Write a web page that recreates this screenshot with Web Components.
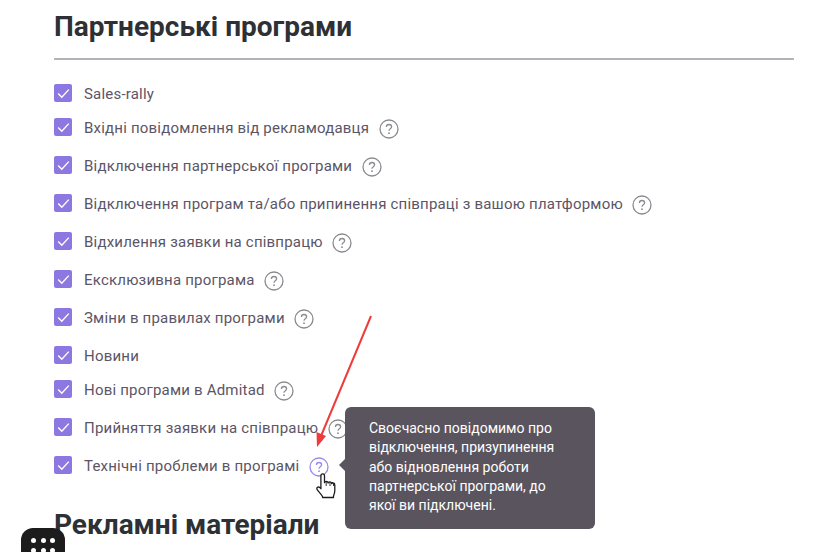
<!DOCTYPE html>
<html>
<head>
<meta charset="utf-8">
<style>
    html, body { margin: 0; height: 100%; overflow: hidden; background: #fff; }
    body { font-family: Roboto, "Liberation Sans", sans-serif; position: relative; }
</style>
</head>
<body>
<notify-page>
    <notify-section title="Партнерські програми">
        <notify-row>Sales-rally</notify-row>
        <notify-row hint>Вхідні повідомлення від рекламодавця</notify-row>
        <notify-row hint>Відключення партнерської програми</notify-row>
        <notify-row hint>Відключення програм та/або припинення співпраці з вашою платформою</notify-row>
        <notify-row hint>Відхилення заявки на співпрацю</notify-row>
        <notify-row hint>Ексклюзивна програма</notify-row>
        <notify-row hint>Зміни в правилах програми</notify-row>
        <notify-row>Новини</notify-row>
        <notify-row hint>Нові програми в Admitad</notify-row>
        <notify-row hint>Прийняття заявки на співпрацю</notify-row>
        <notify-row hint="active">Технічні проблеми в програмі</notify-row>
    </notify-section>
    <notify-section title="Рекламні матеріали" bare></notify-section>
</notify-page>
<hint-tooltip>Своєчасно повідомимо про відключення, призупинення або відновлення роботи партнерської програми, до якої ви підключені.</hint-tooltip>
<shot-marks></shot-marks>
<chat-launcher></chat-launcher>

<script>
class NotifyPage extends HTMLElement {
    constructor () {
        super()
        this.attachShadow({mode: 'open'})
    }

    connectedCallback () {
        this.shadowRoot.innerHTML = `
            <style>
                :host {
                    display: flex;
                    flex-direction: column;
                    padding: 0 24px 0 54px;
                }
            </style>
            <slot></slot>
        `
    }
}

class NotifySection extends HTMLElement {
    constructor () {
        super()
        this.attachShadow({mode: 'open'})
    }

    connectedCallback () {
        const bare = this.hasAttribute('bare')
        this.shadowRoot.innerHTML = `
            <style>
                :host {
                    display: block;
                }
                h2 {
                    color: #2d3136;
                    font-size: 28px;
                    font-weight: 700;
                    line-height: 34px;
                    margin: 0;
                    padding-top: 10px;
                }
                hr {
                    background: #b5b2b9;
                    border: 0;
                    height: 2px;
                    margin: 14px 0 24px;
                }
                :host([bare]) h2 {
                    padding-top: 14px;
                }
            </style>
            <h2>${this.getAttribute('title')}</h2>
            ${bare ? '' : '<hr>'}
            <slot></slot>
        `
    }
}

class NotifyRow extends HTMLElement {
    constructor () {
        super()
        this.attachShadow({mode: 'open'})
    }

    connectedCallback () {
        const hint = this.getAttribute('hint')
        const active = hint === 'active'
        const tint = active ? '#9a88ea' : '#8c8a8f'
        const icon = hint === null ? '' : `
            <svg class="hint" width="20" height="20" viewBox="0 0 20 20" fill="none">
                <circle cx="10" cy="10" r="9" stroke="${tint}" stroke-width="1.3"/>
                <path d="M7.4 8c0-1.5 1.1-2.5 2.6-2.5s2.6 1 2.6 2.3c0 1.9-2.6 2-2.6 3.9" stroke="${tint}" stroke-width="1.3"/>
                <circle cx="10" cy="14.2" r="0.9" fill="${tint}"/>
            </svg>
        `
        this.shadowRoot.innerHTML = `
            <style>
                :host {
                    align-items: flex-start;
                    color: #5c5566;
                    display: flex;
                    font-size: 15px;
                    line-height: 18px;
                    margin-bottom: 16px;
                }
                .box {
                    align-items: center;
                    background: #8d78e2;
                    border-radius: 2px;
                    display: flex;
                    flex: none;
                    height: 18px;
                    justify-content: center;
                    margin-right: 12px;
                    width: 18px;
                }
                .label {
                    letter-spacing: 0.2px;
                    line-height: 20px;
                    margin-bottom: -2px;
                }
                .hint {
                    display: block;
                    flex: none;
                    margin: 1px 0 1px 9.5px;
                }
            </style>
            <span class="box">
                <svg width="13" height="11" viewBox="0 0 13 11" fill="none">
                    <path d="M1.2 5.6 4.8 9.2 11.8 1.6" stroke="#fff" stroke-width="1.4"/>
                </svg>
            </span>
            <span class="label"><slot></slot></span>
            ${icon}
        `
    }
}

class HintTooltip extends HTMLElement {
    constructor () {
        super()
        this.attachShadow({mode: 'open'})
    }

    connectedCallback () {
        this.shadowRoot.innerHTML = `
            <style>
                :host {
                    background: #5a545e;
                    border-radius: 6px;
                    box-sizing: border-box;
                    color: #fff;
                    display: block;
                    font-size: 14px;
                    height: 122px;
                    left: 345px;
                    line-height: 19.3px;
                    padding: 12px 36px 0 24px;
                    position: absolute;
                    top: 407px;
                    width: 250px;
                }
                :host::before {
                    border-bottom: 6px solid transparent;
                    border-right: 6px solid #5a545e;
                    border-top: 6px solid transparent;
                    content: '';
                    left: -6px;
                    position: absolute;
                    top: 52px;
                }
            </style>
            <slot></slot>
        `
    }
}

class ShotMarks extends HTMLElement {
    constructor () {
        super()
        this.attachShadow({mode: 'open'})
    }

    connectedCallback () {
        this.shadowRoot.innerHTML = `
            <style>
                :host {
                    display: block;
                    height: 552px;
                    left: 0;
                    pointer-events: none;
                    position: absolute;
                    top: 0;
                    width: 818px;
                }
            </style>
            <svg width="818" height="552" viewBox="0 0 818 552" fill="none">
                <path d="M371 316 321 436" stroke="#ee3b3b" stroke-width="2"/>
                <path d="M317 447 316.5 432 326 436Z" fill="#ee3b3b"/>
                <path d="M322.5 496.5c-1.5-2.6-3.6-4.4-5.2-6.6-.9-1.2-.5-2.4.6-2.8 1-.3 2 .3 3 1.6v-12.8c0-1.2.8-2 1.8-2s1.8.8 1.8 2v6.8c.3-.9 1-1.3 1.8-1.3 1 0 1.7.7 1.8 1.6.3-.8 1.1-1.2 1.9-1.1.9.1 1.6.8 1.7 1.7.3-.6.9-.9 1.5-.8 1 .1 1.6 1 1.6 2.1v5.6c0 1.9-.5 3.6-1.3 5.4v1.6h-10.9z"
                    fill="#fff" stroke="#1c1c1c" stroke-width="1.3" stroke-linejoin="round"/>
                <path d="M326.2 481v5M330 482v4M333.5 483v3" stroke="#1c1c1c" stroke-width="0.9"/>
            </svg>
        `
    }
}

class ChatLauncher extends HTMLElement {
    constructor () {
        super()
        this.attachShadow({mode: 'open'})
    }

    connectedCallback () {
        const dots = Array.from({length: 9}, () => '<i></i>').join('')
        this.shadowRoot.innerHTML = `
            <style>
                :host {
                    background: #1c1c1c;
                    border-radius: 12px;
                    box-sizing: border-box;
                    display: grid;
                    gap: 4.5px;
                    grid-template-columns: repeat(3, 5px);
                    grid-auto-rows: 5px;
                    height: 44px;
                    left: 21px;
                    padding: 10px 0 0 10px;
                    position: absolute;
                    top: 528px;
                    width: 44px;
                }
                i {
                    background: #fff;
                    border-radius: 50%;
                }
            </style>
            ${dots}
        `
    }
}

window.customElements.define('notify-page', NotifyPage)
window.customElements.define('notify-section', NotifySection)
window.customElements.define('notify-row', NotifyRow)
window.customElements.define('hint-tooltip', HintTooltip)
window.customElements.define('shot-marks', ShotMarks)
window.customElements.define('chat-launcher', ChatLauncher)
</script>
</body>
</html>
